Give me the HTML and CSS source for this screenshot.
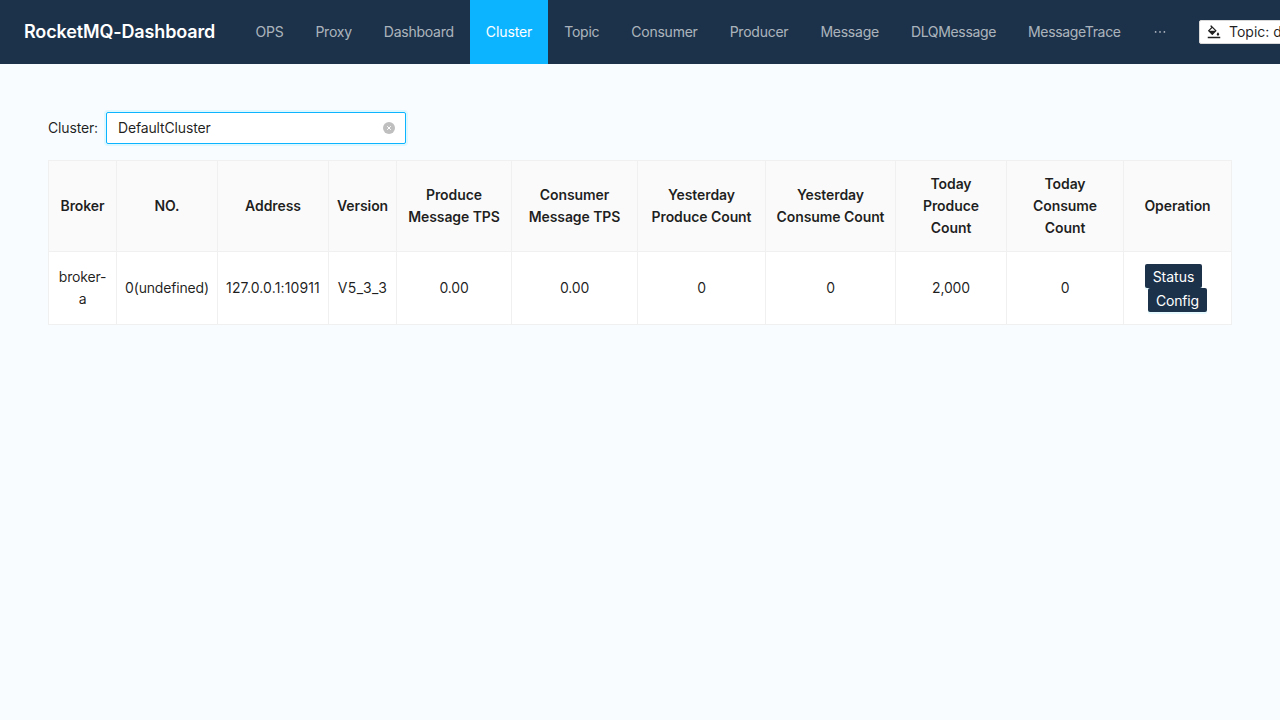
FILE: index.html
```
<!DOCTYPE html>
<html lang="en">

<head>
    <meta charset="UTF-8">
    <meta name="viewport" content="width=device-width, initial-scale=1.0">
    <title>RocketMQ-Dashboard</title>
    <link rel="stylesheet" href="styles.css">
</head>

<body>
    <header class="header">
        <div class="logo">RocketMQ-Dashboard</div>

        <ul class="menu">
            <li class="menu-item">OPS</li>
            <li class="menu-item">Proxy</li>
            <li class="menu-item">Dashboard</li>
            <li class="menu-item active">Cluster</li>
            <li class="menu-item">Topic</li>
            <li class="menu-item">Consumer</li>
            <li class="menu-item">Producer</li>
            <li class="menu-item">Message</li>
            <li class="menu-item menu-item-long">DLQMessage</li>
            <li class="menu-item menu-item-long">MessageTrace</li>
            <li class="menu-item">
                <svg class="icon" viewBox="64 64 896 896">
                    <path d="M176 511a56 56 0 10112 0 56 56 0 10-112 0zm280 0a56 56 0 10112 0 56 56 0 10-112 0zm280 0a56 56 0 10112 0 56 56 0 10-112 0z" />
                </svg>
            </li>
        </ul>

        <button class="theme-btn">
            <svg class="icon" viewBox="64 64 896 896">
                <path d="M766.4 744.3c43.7 0 79.4-36.2 79.4-80.5 0-53.5-79.4-140.8-79.4-140.8S687 610.3 687 663.8c0 44.3 35.7 80.5 79.4 80.5zm-377.1-44.1c7.1 7.1 18.6 7.1 25.6 0l256.1-256c7.1-7.1 7.1-18.6 0-25.6l-256-256c-.6-.6-1.3-1.2-2-1.7l-78.2-78.2a9.11 9.11 0 00-12.8 0l-48 48a9.11 9.11 0 000 12.8l67.2 67.2-207.8 207.9c-7.1 7.1-7.1 18.6 0 25.6l255.9 256zm12.9-448.6l178.9 178.9H223.4l178.8-178.9zM904 816H120c-4.4 0-8 3.6-8 8v80c0 4.4 3.6 8 8 8h784c4.4 0 8-3.6 8-8v-80c0-4.4-3.6-8-8-8z" />
            </svg>
            <span>Topic: default</span>
        </button>
    </header>

    <main class="content">
        <div class="filter">
            <label>Cluster:</label>
            <div class="select">
                <span>DefaultCluster</span>
                <svg class="clear" viewBox="0 0 12 12">
                    <circle cx="6" cy="6" r="6" />
                    <path d="M4.2 4.2l3.6 3.6M7.8 4.2L4.2 7.8" />
                </svg>
            </div>
        </div>

        <table class="table">
            <colgroup>
                <col class="col-broker">
                <col class="col-no">
                <col class="col-address">
                <col class="col-version">
                <col class="col-produce-tps">
                <col class="col-consumer-tps">
                <col class="col-yesterday-produce">
                <col class="col-yesterday-consume">
                <col class="col-today-produce">
                <col class="col-today-consume">
                <col class="col-operation">
            </colgroup>
            <thead>
                <tr>
                    <th>Broker</th>
                    <th>NO.</th>
                    <th>Address</th>
                    <th>Version</th>
                    <th>Produce Message TPS</th>
                    <th>Consumer Message TPS</th>
                    <th>Yesterday Produce Count</th>
                    <th>Yesterday Consume Count</th>
                    <th>Today Produce Count</th>
                    <th>Today Consume Count</th>
                    <th>Operation</th>
                </tr>
            </thead>
            <tbody>
                <tr>
                    <td>broker-a</td>
                    <td>0(undefined)</td>
                    <td class="address">127.0.0.1:10911</td>
                    <td class="version">V5_3_3</td>
                    <td>0.00</td>
                    <td>0.00</td>
                    <td>0</td>
                    <td>0</td>
                    <td>2,000</td>
                    <td>0</td>
                    <td class="actions">
                        <button class="btn btn-status">Status</button>
                        <button class="btn btn-config">Config</button>
                    </td>
                </tr>
            </tbody>
        </table>
    </main>
</body>

</html>
```
FILE: styles.css
```
* {
    margin: 0;
    padding: 0;
    box-sizing: border-box;
}

body {
    font-family: Inter, sans-serif;
    font-size: 14px;
    line-height: 22px;
    color: rgba(0, 0, 0, 0.88);
    background: #f8fcff;
    min-height: 100vh;
    overflow: hidden;
}

.icon {
    width: 14px;
    height: 14px;
    fill: currentColor;
    flex: none;
}

/* Header */
.header {
    display: flex;
    align-items: center;
    height: 64px;
    padding-left: 24px;
    background: #1c324a;
    white-space: nowrap;
}

.logo {
    width: 215.5px;
    flex: none;
    color: #fff;
    font-size: 18px;
    font-weight: 600;
    letter-spacing: -0.14px;
}

.menu {
    display: flex;
    flex: none;
    width: 959.5px;
    list-style: none;
    letter-spacing: -0.24px;
}

.menu-item {
    display: flex;
    align-items: center;
    height: 64px;
    padding: 0 16px;
    color: rgba(255, 255, 255, 0.65);
}

.menu-item.active {
    color: #fff;
    letter-spacing: -0.12px;
    background: #0cb4ff;
}

.menu-item-long {
    letter-spacing: -0.34px;
}

.theme-btn {
    display: flex;
    align-items: center;
    flex: none;
    gap: 8px;
    height: 24px;
    padding: 0 7px;
    font: inherit;
    color: inherit;
    background: #fff;
    border: 1px solid #d9d9d9;
    border-radius: 2px;
}

/* Content */
.content {
    padding: 48px;
}

.filter {
    display: flex;
    align-items: center;
    gap: 8px;
    margin-bottom: 16px;
    letter-spacing: -0.15px;
}

.filter label {
    width: 50px;
}

.select {
    display: flex;
    align-items: center;
    justify-content: space-between;
    width: 300px;
    height: 32px;
    padding: 0 10px 0 11px;
    background: #fff;
    border: 1px solid #0cb4ff;
    border-radius: 2px;
    box-shadow: 0 0 0 2px rgba(5, 207, 255, 0.1);
}

.clear {
    width: 12px;
    height: 12px;
    fill: #bfbfbf;
    stroke: #fff;
    stroke-width: 1;
}

.clear circle {
    stroke: none;
}

/* Table */
.table {
    width: 1184px;
    table-layout: fixed;
    border-collapse: separate;
    border-spacing: 0;
    border-top: 1px solid #f0f0f0;
    border-left: 1px solid #f0f0f0;
    background: #fff;
}

.table th,
.table td {
    padding: 12px 8px;
    text-align: center;
    vertical-align: middle;
    border-right: 1px solid #f0f0f0;
    border-bottom: 1px solid #f0f0f0;
}

.table th {
    font-weight: 600;
    letter-spacing: -0.08px;
    background: #fafafa;
}

.table td {
    letter-spacing: -0.17px;
}

.table .address {
    letter-spacing: 0.13px;
}

.table .version {
    letter-spacing: 0.4px;
}

.col-broker,
.col-version {
    width: 68px;
}

.col-no {
    width: 101px;
}

.col-address,
.col-today-produce {
    width: 111px;
}

.col-produce-tps {
    width: 115px;
}

.col-consumer-tps {
    width: 126px;
}

.col-yesterday-produce {
    width: 128px;
}

.col-yesterday-consume {
    width: 130px;
}

.col-today-consume {
    width: 117px;
}

.col-operation {
    width: 108px;
}

.table .actions {
    font-size: 0;
}

.btn {
    height: 24px;
    padding: 2px 8px 0;
    font-family: inherit;
    font-size: 14px;
    line-height: 22px;
    color: #fff;
    background: #1c324a;
    border: none;
    border-radius: 2px;
    box-shadow: 0 2px 0 rgba(5, 207, 255, 0.1);
    vertical-align: top;
}

.btn-status {
    margin-right: 8px;
}

.btn-config {
    letter-spacing: -0.2px;
}
```
